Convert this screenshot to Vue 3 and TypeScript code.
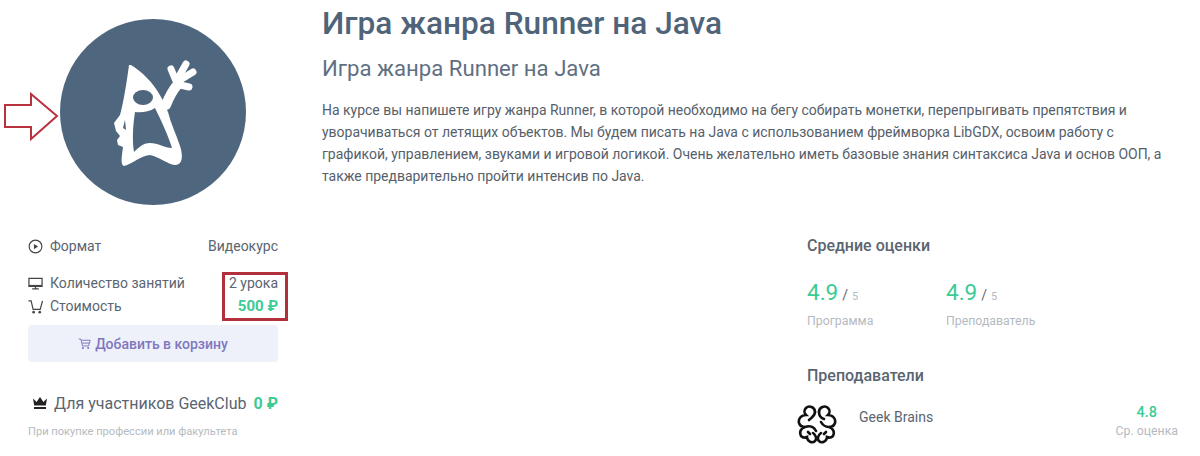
<script setup lang="ts">
const body =
  "M131 65C141 71 153 82 161 97C165 103 166 108 168 112C171 124 176 134 180 146C183 155 183 164 176 165C168 165 160 157 150 155C142 155 132 164 124 166C120 165 122 155 123 147L118 145L117 140L120 136L116 131L114 123L120 115C124 100 127 80 129 65Z";
const hole =
  "M155 108C161 120 168 135 172 148C165 148 158 143 150 143C143 143 138 148 134 152C132 140 133 125 135 112C141 113 149 112 155 108Z";
</script>

<template>
  <div class="page">
    <svg class="arrow" viewBox="0 0 60 50" aria-hidden="true">
      <path d="M5 13H31V2L57 24 31 47V35H5Z" />
    </svg>
    <div class="frame"></div>

    <aside class="side">
      <div class="avatar">
        <svg viewBox="60 19 186 186" width="186" height="186" aria-hidden="true">
          <circle cx="153" cy="112" r="93" fill="#4e667e" />
          <path :d="body" fill="#fff" />
          <path d="M166 105C169 97 173 90 178 84" fill="none" stroke="#fff" stroke-width="10" stroke-linecap="round" />
          <g fill="none" stroke="#fff" stroke-linecap="round" stroke-width="7">
            <path d="M176 81 171 69" />
            <path d="M177 80 186 64" />
            <path d="M180 80 193 72" />
            <path d="M180 85 189 87" />
          </g>
          <path :d="hole" fill="#4e667e" />
          <ellipse cx="143" cy="97.5" rx="10" ry="7.5" fill="#4e667e" />
          <path d="M125 120l-2 8 3 2z" fill="#4e667e" />
        </svg>
      </div>

      <div class="row format">
        <span class="label">
          <svg class="ic" viewBox="0 0 16 16"><circle cx="8" cy="8" r="6.8" fill="none" stroke="#444" stroke-width="1.2" /><path d="M6.3 5.2 10.8 8 6.3 10.8z" fill="#444" /></svg>
          Формат
        </span>
        <span>Видеокурс</span>
      </div>
      <div class="row lessons">
        <span class="label">
          <svg class="ic" viewBox="0 0 16 16"><path d="M1 2.5h14v8.5h-14zM8 11v2.5M4.5 13.8h7" fill="none" stroke="#444" stroke-width="1.3" /><path d="M1 9.5h14v1.5h-14z" fill="#444" /></svg>
          Количество занятий
        </span>
        <span>2 урока</span>
      </div>
      <div class="row cost">
        <span class="label">
          <svg class="ic" viewBox="0 0 16 16"><path d="M0.5 2h2.8L5.5 11h7.5L15.5 2" fill="none" stroke="#444" stroke-width="1.3" /><circle cx="6" cy="14" r="1.4" fill="#444" /><circle cx="12.5" cy="14" r="1.4" fill="#444" /></svg>
          Стоимость
        </span>
        <span class="price">500 ₽</span>
      </div>
      <button class="buy">
        <svg class="ic-buy" viewBox="0 0 16 16"><path d="M1 2.5h2.5L5.5 11h7.5L15 4H4.2M5 7.5h9" fill="none" stroke="#7f78c0" stroke-width="1.2" /><circle cx="6" cy="13.5" r="1.3" fill="#7f78c0" /><circle cx="12.5" cy="13.5" r="1.3" fill="#7f78c0" /></svg>
        Добавить в корзину
      </button>
      <div class="club">
        <span class="club-label">
          <svg class="crown" viewBox="0 0 16 14"><path d="M1 2.5 4.6 6 8 1l3.4 5L15 2.5 13.8 9.5H2.2z" fill="#222" /><path d="M2 11h12v2H2z" fill="#222" /></svg>
          Для участников GeekClub
        </span>
        <span class="club-price">0 ₽</span>
      </div>
      <div class="hint">При покупке профессии или факультета</div>
    </aside>

    <main class="main">
      <h1>Игра жанра Runner на Java</h1>
      <h2>Игра жанра Runner на Java</h2>
      <p class="desc">
        На курсе вы напишете игру жанра Runner, в которой необходимо на бегу собирать монетки, перепрыгивать препятствия и
        уворачиваться от летящих объектов. Мы будем писать на Java с использованием фреймворка LibGDX, освоим работу с
        графикой, управлением, звуками и игровой логикой. Очень желательно иметь базовые знания синтаксиса Java и основ ООП, а
        также предварительно пройти интенсив по Java.
      </p>

      <section class="stats">
        <h3>Средние оценки</h3>
        <div class="scores">
          <div class="score">
            <div><b>4.9</b> <i>/</i> <small>5</small></div>
            <span>Программа</span>
          </div>
          <div class="score">
            <div><b>4.9</b> <i>/</i> <small>5</small></div>
            <span>Преподаватель</span>
          </div>
        </div>
        <h3 class="teachers">Преподаватели</h3>
        <div class="teacher">
          <svg class="brain" viewBox="0 0 40 40" fill="none" stroke="#111" stroke-width="2.6" stroke-linecap="round">
            <path d="M18 8C18 3 12 1 9 4 7 6 7 9 9 11 4 11 1 15 2 19 3 22 5 23 8 23 4 24 2 28 4 32 6 34 8 34 10 33 10 37 15 40 18 37 20 35 19 31 16 29" />
            <path d="M22 8C22 3 28 1 31 4 33 6 33 9 31 11 36 11 39 15 38 19 37 22 35 23 32 23 36 24 38 28 36 32 34 34 32 34 30 33 30 37 25 40 22 37 20 35 21 31 24 29" />
            <path d="M18 8C18 12 15 13 12 16M22 8C22 11 24 14 27 15M8 23C13 21 17 23 19 27M32 23C28 23 25 20 24 18M11 28 13 30M29 28 27 30" />
          </svg>
          <span class="teacher-name">Geek Brains</span>
          <div class="teacher-score">
            <b>4.8</b>
            <span>Ср. оценка</span>
          </div>
        </div>
      </section>
    </main>
  </div>
</template>

<style>
html, body {
  margin: 0;
  background: #fff;
}
</style>

<style scoped>
.page {
  position: relative;
  display: flex;
  width: 1200px;
  height: 456px;
  overflow: hidden;
  background: #fff;
  font-family: Roboto, "Liberation Sans", sans-serif;
  color: #5a6570;
}

.arrow {
  position: absolute;
  left: 0;
  top: 92px;
  width: 60px;
  height: 50px;
  fill: #fff;
  stroke: #b8323f;
  stroke-width: 2;
}

.frame {
  position: absolute;
  left: 222px;
  top: 272px;
  width: 60px;
  height: 43px;
  border: 3px solid #b2303c;
}

.side {
  width: 250px;
  margin-left: 28px;
  font-size: 14px;
}

.avatar {
  height: 186px;
  margin: 19px 0 0 32px;
}

.avatar svg {
  display: block;
}

.row {
  display: flex;
  justify-content: space-between;
  align-items: center;
  height: 20px;
}

.format {
  margin-top: 31px;
}

.lessons {
  margin-top: 17px;
}

.cost {
  margin-top: 3px;
}

.label {
  display: flex;
  align-items: center;
  gap: 7px;
}

.ic {
  width: 15px;
  height: 15px;
}

.price {
  font-size: 15px;
  font-weight: 700;
  color: #3ccb94;
}

.buy {
  display: flex;
  align-items: center;
  justify-content: center;
  gap: 4px;
  width: 250px;
  height: 37px;
  margin-top: 9px;
  padding: 0;
  border: 0;
  border-radius: 4px;
  background: #eef0fa;
  color: #7f78c0;
  font: 500 14px Roboto, "Liberation Sans", sans-serif;
}

.ic-buy {
  width: 13px;
  height: 13px;
}

.club {
  display: flex;
  justify-content: space-between;
  align-items: center;
  margin-top: 30px;
  height: 22px;
  font-size: 16px;
}

.club-label {
  display: flex;
  align-items: center;
  gap: 6px;
  margin-left: 4px;
}

.crown {
  width: 16px;
  height: 14px;
}

.club-price {
  font-weight: 700;
  color: #3ccb94;
}

.hint {
  margin-top: 11px;
  font-size: 11.1px;
  color: #b5bac0;
}

.main {
  width: 850px;
  margin-left: 44px;
}

h1 {
  margin: 4px 0 0;
  font-size: 31.6px;
  line-height: 40px;
  font-weight: 500;
  color: #4f6479;
}

h2 {
  margin: 9px 0 0;
  font-size: 22.15px;
  line-height: 30px;
  font-weight: 400;
  color: #5f7082;
}

.desc {
  margin: 16px 0 0;
  font-size: 13.97px;
  line-height: 22px;
  color: #56606a;
}

.stats {
  width: 371px;
  margin: 49px 0 0 485px;
}

h3 {
  margin: 0;
  font-size: 16px;
  line-height: 20px;
  font-weight: 500;
  color: #5a6570;
}

.scores {
  display: flex;
  margin-top: 23px;
}

.score {
  width: 139px;
}

.score b {
  font-size: 22.5px;
  font-weight: 400;
  color: #3ccb94;
}

.score i {
  font-style: normal;
  font-size: 14px;
  color: #666;
}

.score small {
  font-size: 11px;
  color: #b5bac0;
}

.score span {
  display: block;
  margin-top: 9px;
  font-size: 12.3px;
  color: #b5bac0;
}

.teachers {
  margin-top: 38px;
}

.teacher {
  display: flex;
  margin: 18px 0 0 -10px;
}

.brain {
  width: 40px;
  height: 40px;
}

.teacher-name {
  margin: 5px 0 0 22px;
  font-size: 14px;
  color: #5a6570;
}

.teacher-score {
  margin-left: auto;
  text-align: center;
}

.teacher-score b {
  display: block;
  font-size: 14.5px;
  font-weight: 500;
  color: #3ccb94;
}

.teacher-score span {
  display: block;
  margin-top: 3px;
  font-size: 12.3px;
  color: #b5bac0;
}
</style>
